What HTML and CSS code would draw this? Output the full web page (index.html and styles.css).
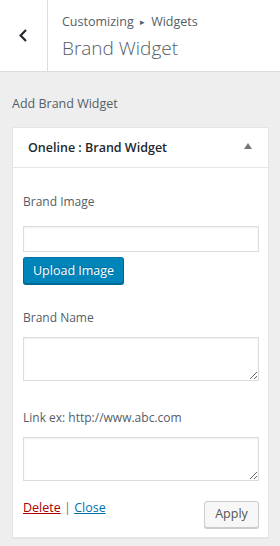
FILE: index.html
```html
<!DOCTYPE html>
<html>
<head>
<meta charset="utf-8">
<link rel="stylesheet" href="styles.css">
</head>
<body>
<div class="header">
  <button class="back" aria-label="Back">
    <svg width="8" height="13" viewBox="0 0 8 13"><path d="M7 1 L1.6 6.5 L7 12" fill="none" stroke="#23282d" stroke-width="2.2"/></svg>
  </button>
  <div class="titles">
    <div class="action">Customizing <span class="sep">▸</span> Widgets</div>
    <div class="title">Brand Widget</div>
  </div>
</div>
<div class="content">
  <div class="add-label">Add Brand Widget</div>
  <div class="widget">
    <div class="widget-top">
      <span class="widget-title">Oneline : Brand Widget</span>
      <svg class="arrow" width="8" height="6" viewBox="0 0 8 6"><path d="M4 0 L8 6 L0 6 Z" fill="#72777c"/></svg>
    </div>
    <div class="widget-inside">
      <div class="field field-image">
        <label class="lbl">Brand Image</label>
        <input class="input" type="text">
        <button class="btn-primary">Upload Image</button>
      </div>
      <div class="field field-name">
        <label class="lbl">Brand Name</label>
        <textarea class="textarea"></textarea>
      </div>
      <div class="field field-link">
        <label class="lbl">Link ex: http://www.abc.com</label>
        <textarea class="textarea"></textarea>
      </div>
      <div class="actions">
        <div class="links"><a class="delete" href="#">Delete</a> <span class="bar">|</span> <a class="close" href="#">Close</a></div>
        <button class="btn">Apply</button>
      </div>
    </div>
  </div>
</div>
</body>
</html>
```
FILE: styles.css
```css
* { box-sizing: border-box; }
html, body { margin: 0; padding: 0; }
body {
  background: #eee;
  font-family: "Open Sans", "Noto Sans", sans-serif;
  font-size: 13px;
  color: #555d66;
  width: 280px;
  height: 546px;
  overflow: hidden;
}
.header {
  display: flex;
  background: #fff;
  height: 72px;
  border-bottom: 1px solid #ddd;
}
.back {
  width: 48px;
  flex: none;
  border: 0;
  border-right: 1px solid #ddd;
  background: #fff;
  display: flex;
  align-items: center;
  justify-content: center;
  padding: 0 2px 0 0;
}
.titles {
  padding: 12px 0 0 14px;
}
.action {
  font-size: 12.5px;
  line-height: 20px;
  color: #555d66;
}
.sep { font-size: 9px; position: relative; top: -1px; padding: 0 3px; }
.title {
  font-size: 19px;
  font-weight: 300;
  line-height: 28px;
  color: #555d66;
  margin-top: 1px;
}
.content {
  padding: 23px 11px 0 12px;
}
.add-label {
  font-size: 12.5px;
  line-height: 18px;
  color: #555d66;
  margin-bottom: 14px;
}
.widget {
  background: #fff;
  border: 1px solid #e5e5e5;
  box-shadow: 0 1px 1px rgba(0,0,0,0.04);
}
.widget-top {
  display: flex;
  justify-content: space-between;
  align-items: center;
  height: 40px;
  border-bottom: 1px solid #e5e5e5;
  padding: 0 16px 0 15px;
}
.widget-title {
  font-size: 12.5px;
  font-weight: 600;
  color: #23282d;
}
.arrow {
  display: block;
  margin-top: -3px;
}
.widget-inside {
  padding: 25px 9px 9px 10px;
}
.field {
  display: flex;
  flex-direction: column;
  align-items: flex-start;
}
.lbl {
  font-size: 12px;
  line-height: 18px;
  color: #555d66;
  margin-bottom: 10px;
}
.field-image { margin-bottom: 25px; }
.field-image .lbl { margin-bottom: 15px; }
.field-name { margin-bottom: 28px; }
.field-link { margin-bottom: 18px; }
.input {
  width: 100%;
  height: 26px;
  border: 1px solid #ddd;
  box-shadow: inset 0 1px 2px rgba(0,0,0,0.07);
  margin: 0 0 5px 0;
  font: inherit;
}
.textarea {
  display: block;
  width: 100%;
  height: 44px;
  border: 1px solid #ddd;
  box-shadow: inset 0 1px 2px rgba(0,0,0,0.07);
  margin: 0;
  resize: vertical;
  font: inherit;
}
.btn-primary {
  background: #0085ba;
  border: 1px solid #0073aa;
  border-color: #0073aa #006799 #006799;
  box-shadow: 0 1px 0 #006799;
  color: #fff;
  font-family: inherit;
  font-size: 12.5px;
  height: 27px;
  padding: 0 9px 1px;
  border-radius: 3px;
  text-shadow: 0 -1px 1px #006799;
}
.actions {
  display: flex;
  justify-content: space-between;
  align-items: flex-start;
}
.links {
  font-size: 12.5px;
  line-height: 18px;
  color: #555d66;
}
.bar { color: #72777c; }
.delete { color: #a00; }
.close { color: #0073aa; }
.btn {
  background: #f7f7f7;
  border: 1px solid #ccc;
  box-shadow: 0 1px 0 #ccc;
  color: #555;
  font-family: inherit;
  font-size: 12.5px;
  width: 55px;
  height: 27px;
  padding: 0 0 2px;
  border-radius: 3px;
  margin-top: 2px;
}
```
